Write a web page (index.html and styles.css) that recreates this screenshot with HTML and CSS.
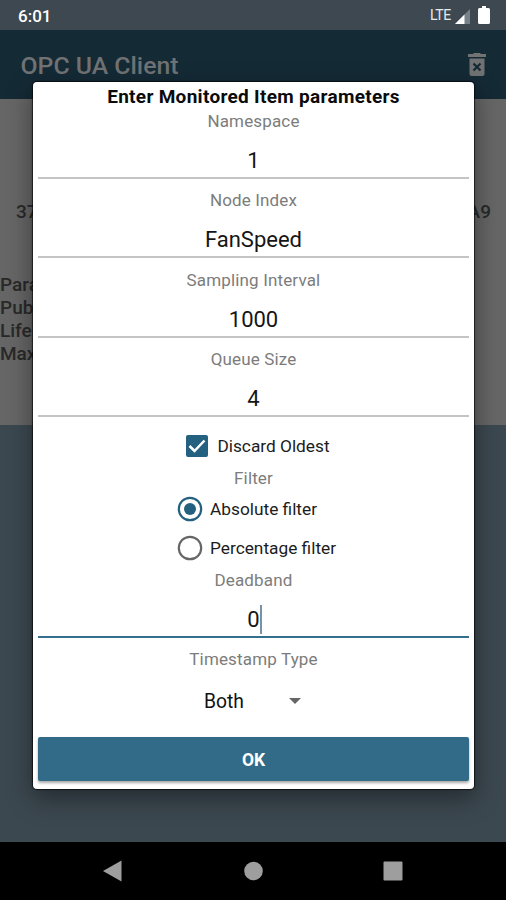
FILE: index.html
```html
<!DOCTYPE html>
<html lang="en">
<head>
<meta charset="utf-8">
<title>OPC UA Client</title>
<link rel="stylesheet" href="styles.css">
</head>
<body>
<div class="phone">
  <header class="status">
    <span class="clock">6:01</span>
    <span class="lte">LTE</span>
    <svg class="signal" width="15" height="15" viewBox="0 0 15 15"><path d="M15 0V15H0Z" fill="#76818a"/><path d="M9.5 5.5V15H0Z" fill="#fff"/></svg>
    <svg class="battery" width="12" height="18" viewBox="0 0 12 18"><path d="M4 0h4v2h2.500q1.500 0 1.500 1.500v13q0 1.500-1.500 1.500h-9Q0 18 0 16.500v-13Q0 2 1.500 2H4Z" fill="#fff"/></svg>
  </header>
  <div class="appbar">
    <h1 class="app-title">OPC UA Client</h1>
    <svg class="trash" width="18" height="24" viewBox="0 0 18 24"><path d="M5 1 6 0h6l1 1h5v3H0V1ZM1.500 5.500h15V21q0 2-2 2h-11q-2 0-2-2Z" fill="#707274"/><path d="m5.500 10.500 7 7m0-7-7 7" stroke="#142a35" stroke-width="2.200"/></svg>
  </div>
  <main class="page">
    <div class="ids"><span>37</span><span>A9</span></div>
    <div class="params"><span>Para</span><span>Pub</span><span>Life</span><span>Max</span></div>
  </main>
  <div class="lower"></div>
  <nav class="nav">
    <svg width="20" height="22" viewBox="0 0 20 22"><path d="M18.500 .5v21L0 11Z" fill="#9e9e9e"/></svg>
    <svg width="20" height="20" viewBox="0 0 20 20"><circle cx="10.500" cy="10" r="9.300" fill="#9e9e9e"/></svg>
    <svg width="20" height="20" viewBox="0 0 20 20"><rect x=".5" y=".5" width="19" height="19" rx="1" fill="#9e9e9e"/></svg>
  </nav>
  <section class="dialog">
    <h2 class="title">Enter Monitored Item parameters</h2>
    <div class="field"><div class="label">Namespace</div><div class="value">1</div></div>
    <div class="field"><div class="label">Node Index</div><div class="value">FanSpeed</div></div>
    <div class="field"><div class="label">Sampling Interval</div><div class="value">1000</div></div>
    <div class="field"><div class="label">Queue Size</div><div class="value">4</div></div>
    <div class="check">
      <svg width="22" height="22" viewBox="0 0 22 22"><rect width="22" height="22" rx="2" fill="#24607f"/><path d="m3.500 11 5 5L18.500 5.500" fill="none" stroke="#fff" stroke-width="2.500"/></svg>
      <span class="option">Discard Oldest</span>
    </div>
    <div class="label filter">Filter</div>
    <div class="radios">
      <div class="radio"><svg width="26" height="26" viewBox="0 0 26 26"><circle cx="13" cy="13" r="11.200" fill="none" stroke="#24607f" stroke-width="2.200"/><circle cx="13" cy="13" r="6" fill="#24607f"/></svg><span class="option">Absolute filter</span></div>
      <div class="radio"><svg width="26" height="26" viewBox="0 0 26 26"><circle cx="13" cy="13" r="11.200" fill="none" stroke="#666" stroke-width="2.200"/></svg><span class="option">Percentage filter</span></div>
    </div>
    <div class="field focused"><div class="label">Deadband</div><div class="value">0<i class="caret"></i></div></div>
    <div class="label">Timestamp Type</div>
    <div class="spinner"><span class="both">Both</span><svg width="12" height="6" viewBox="0 0 12 6"><path d="M0 0h12L6 6Z" fill="#666"/></svg></div>
    <div class="ok">OK</div>
  </section>
</div>
</body>
</html>
```
FILE: styles.css
```css
* { box-sizing: border-box; }
body { margin: 0; font-family: Roboto, "Liberation Sans", sans-serif; }
svg { display: block; flex: none; }
.phone { position: relative; width: 506px; height: 900px; overflow: hidden; display: flex; flex-direction: column; background: #3c4850; }
.status { height: 30px; display: flex; align-items: center; padding: 2px 16px 0 18px; background: #3d4851; color: #fff; }
.clock { font-size: 17px; font-weight: 500; margin-right: auto; }
.lte { font-size: 14px; letter-spacing: -.3px; color: #e8eaeb; position: relative; top: -1px; }
.signal { margin-left: 4px; }
.battery { margin-left: 8px; position: relative; top: -1px; }
.appbar { height: 69px; display: flex; align-items: center; justify-content: space-between; padding: 0 20px 0 20.500px; background: #142a35; color: #707274; }
.app-title { margin: 1px 0 0; font-size: 24.800px; font-weight: 500; }
.page { height: 326px; background: #666; color: #292929; font-weight: 500; font-size: 19px; line-height: 23px; }
.ids { display: flex; justify-content: space-between; padding: 101px 15px 0 16px; }
.params { display: flex; flex-direction: column; padding-top: 50px; }
.lower { flex: 1; background: #3c4850; }
.nav { height: 58px; background: #000; display: flex; align-items: center; justify-content: space-between; padding: 0 103px; }
.dialog { position: absolute; left: 33px; top: 82px; width: 441px; height: 707px; padding: 0 5px; background: #fff; border-radius: 4px; text-align: center; box-shadow: 0 0 1px 1px rgba(0,0,0,.65), 0 9px 24px 2px rgba(0,0,0,.38); }
.title { margin: 0; height: 28px; line-height: 30px; font-size: 19px; letter-spacing: .3px; font-weight: 700; color: #0b0b0b; white-space: nowrap; }
.field { height: 79.250px; }
.label { height: 23px; line-height: 23px; font-size: 17px; color: #7c7c7c; letter-spacing: .15px; }
.filter { line-height: 24px; }
.value { height: 46px; line-height: 56px; font-size: 22px; color: #151515; border-bottom: 2px solid #c4c4c4; }
.focused .value { border-bottom-color: #34708d; }
.caret { display: inline-block; width: 2px; height: 29px; margin-right: -2px; background: #7891a6; vertical-align: -7px; }
.check { height: 39px; display: flex; align-items: center; justify-content: center; gap: 9px; padding: 0 0 2px 9px; }
.option { font-size: 17.300px; color: #1c1c1c; }
.radios { width: 153px; margin: 0 auto; }
.radio { height: 39.500px; display: flex; align-items: center; gap: 7px; white-space: nowrap; }
.focused { margin-top: 1px; }
.spinner { height: 58px; display: flex; align-items: center; padding: 2px 0 0 166px; gap: 45px; }
.both { font-size: 19.300px; color: #111; }
.ok { height: 44px; line-height: 46px; margin-top: 8px; background: #326b87; color: #fff; font-size: 17.500px; font-weight: 700; border-radius: 2px; box-shadow: 0 2px 3px rgba(0,0,0,.35); }
```
